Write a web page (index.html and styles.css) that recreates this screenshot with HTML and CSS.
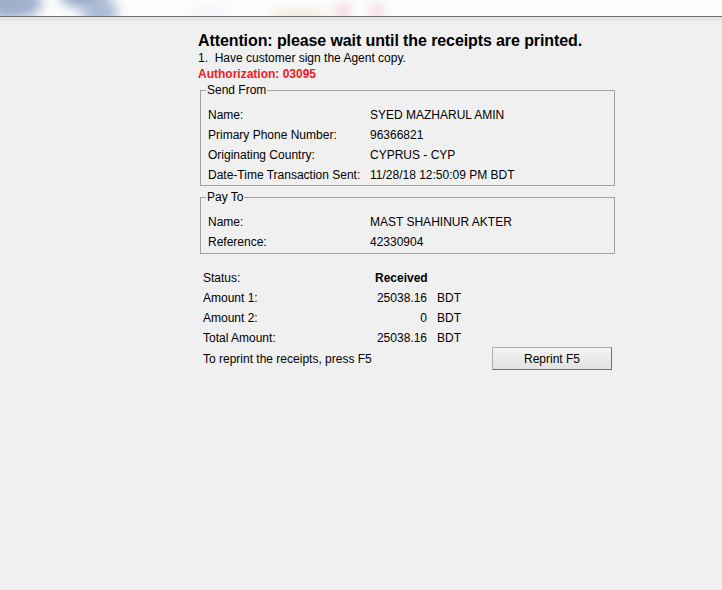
FILE: index.html
```html
<!DOCTYPE html>
<html>
<head>
<meta charset="utf-8">
<link rel="stylesheet" href="styles.css">
</head>
<body>
<div class="topbar"><div class="blob b1"></div><div class="blob b2"></div><div class="blob b2b"></div><div class="blob b3"></div><div class="blob b3b"></div><div class="blob b4"></div><div class="blob b5"></div></div>
<div class="sep"></div>
<main class="content">
  <h1 class="title">Attention: please wait until the receipts are printed.</h1>
  <p class="step">1.&nbsp; Have customer sign the Agent copy.</p>
  <p class="auth">Authorization: 03095</p>

  <fieldset class="group">
    <legend>Send From</legend>
    <div class="row"><span class="lbl">Name:</span><span>SYED MAZHARUL AMIN</span></div>
    <div class="row"><span class="lbl">Primary Phone Number:</span><span>96366821</span></div>
    <div class="row"><span class="lbl">Originating Country:</span><span>CYPRUS - CYP</span></div>
    <div class="row"><span class="lbl">Date-Time Transaction Sent:</span><span>11/28/18 12:50:09 PM BDT</span></div>
  </fieldset>

  <fieldset class="group group2">
    <legend>Pay To</legend>
    <div class="row"><span class="lbl">Name:</span><span>MAST SHAHINUR AKTER</span></div>
    <div class="row"><span class="lbl">Reference:</span><span>42330904</span></div>
  </fieldset>

  <div class="summary">
    <span>Status:</span><span class="val bold">Received</span><span></span>
    <span>Amount 1:</span><span class="val">25038.16</span><span>BDT</span>
    <span>Amount 2:</span><span class="val">0</span><span>BDT</span>
    <span>Total Amount:</span><span class="val">25038.16</span><span>BDT</span>
  </div>
  <div class="reprint">
    <span>To reprint the receipts, press F5</span>
    <button class="btn">Reprint F5</button>
  </div>
</main>
</body>
</html>
```
FILE: styles.css
```css
html, body {
  margin: 0;
  padding: 0;
  background: #f0f0f0;
  font-family: "Liberation Sans", Arial, sans-serif;
  font-size: 12px;
  color: #000;
}
.topbar {
  position: relative;
  height: 16px;
  background: #fdfdfe;
  overflow: hidden;
}
.blob {
  position: absolute;
  border-radius: 50%;
  filter: blur(6px);
}
.b1 { left: -20px; top: -14px; width: 62px; height: 34px; background: #9fb0cc; }
.b2 { left: 60px; top: -16px; width: 50px; height: 24px; background: #95a8c8; }
.b2b { left: 82px; top: 0; width: 36px; height: 24px; background: #a7b7d2; }
.b3 { left: 190px; top: 6px; width: 40px; height: 16px; background: #f3f4f8; }
.b3b { left: 268px; top: 10px; width: 60px; height: 12px; background: #efe8d4; }
.b4 { left: 336px; top: 4px; width: 14px; height: 14px; background: #efc9d1; }
.b5 { left: 371px; top: 4px; width: 12px; height: 14px; background: #f2cbd6; }
.sep {
  height: 1px;
  background: #707070;
  border-bottom: 4px solid #e6e6e6;
}
.content {
  margin-left: 198px;
  width: 418px;
  padding-top: 11px;
}
.title {
  margin: 0;
  font-size: 16px;
  font-weight: bold;
  line-height: 18px;
  letter-spacing: -0.1px;
}
.step {
  margin: 0;
  line-height: 16px;
}
.auth {
  margin: 0;
  color: #ee1c24;
  font-weight: bold;
  line-height: 16px;
}
.group {
  margin: 1px 0 0 2px;
  width: 415px;
  box-sizing: border-box;
  border: 1px solid #a0a0a0;
  padding: 0 0 0 7px;
}
.group legend {
  padding: 0 1px;
  margin-left: -2px;
  line-height: 14px;
}
.group2 { margin-top: 4px; }
.group .row:first-of-type { margin-top: 8px; }
.group2 .row:last-of-type { margin-bottom: 1px; }
.row {
  display: flex;
  line-height: 20px;
}
.lbl { width: 162px; flex: none; }
.summary {
  display: grid;
  grid-template-columns: 162px 52px auto;
  column-gap: 10px;
  line-height: 20px;
  margin: 14px 0 0 5px;
}
.val { text-align: right; }
.bold { font-weight: bold; }
.reprint {
  display: flex;
  justify-content: space-between;
  align-items: center;
  margin: -1px 0 0 5px;
  width: 409px;
}
.btn {
  width: 120px;
  height: 23px;
  font-family: "Liberation Sans", Arial, sans-serif;
  font-size: 12px;
  color: #000;
  background: linear-gradient(#f3f3f3, #e3e3e3);
  border: 1px solid #adadad;
  border-right-color: #707070;
  border-bottom-color: #707070;
  padding: 0;
}
```
